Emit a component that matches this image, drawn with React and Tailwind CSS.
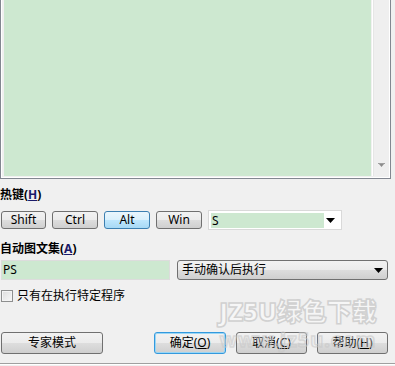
import React from "react";

const font = { fontFamily: '"Noto Sans", "Noto Sans CJK SC", sans-serif' };

function Btn({ children, className = "", variant = "normal" }) {
  const base =
    "flex items-center justify-center rounded-[3px] border text-[12px] leading-none text-black";
  const v =
    variant === "pressed"
      ? "border-[#3c7fb1] bg-[linear-gradient(#eaf6fd_0%,#d9f0fc_50%,#bee6fd_51%,#a7d9f5_100%)]"
      : variant === "default"
      ? "border-[#3399dd] shadow-[inset_0_0_0_1px_#9ad6f5] bg-[linear-gradient(#f2f2f2_0%,#ebebeb_50%,#dddddd_51%,#cfcfcf_100%)]"
      : "border-[#707070] bg-[linear-gradient(#f2f2f2_0%,#ebebeb_50%,#dddddd_51%,#cfcfcf_100%)]";
  return <div className={`${base} ${v} ${className}`}>{children}</div>;
}

function Tri() {
  return (
    <svg width="9" height="5" viewBox="0 0 9 5">
      <path d="M0 0H9L4.5 5Z" fill="#000" />
    </svg>
  );
}

export default function App() {
  return (
    <div
      className="relative w-[395px] h-[366px] overflow-hidden bg-[#f0f0f0] flex flex-col"
      style={font}
    >
      {/* text area */}
      <div className="w-[391px] h-[179px] border-x border-b border-[#828790] flex">
        <div className="flex-1 border-x border-b border-white bg-[#f0f0f0] flex pl-[2px] pb-[1px]">
          <div className="w-[367px] h-full bg-[#cde8d0]" />
          <div className="ml-[1px] w-[1px] bg-white" />
          <div className="flex-1 bg-[#efefef] border-l border-[#e6e6e6] flex flex-col justify-end items-center pb-[8px]">
            <svg width="7" height="5" viewBox="0 0 7 5">
              <path d="M0 0H7V1H0Z" fill="#a0a0a0" />
              <path d="M1 1H6L3.5 4Z" fill="#8c8c8c" />
            </svg>
          </div>
        </div>
      </div>

      <div className="mt-[8px] h-[16px] flex items-center text-[12px] font-bold text-black leading-none">
        热键(<span className="underline text-[#1a1a6a]">H</span>)
      </div>

      <div className="mt-[7px] h-[20px] flex items-center pl-[1px] gap-[6px]">
        <Btn className="w-[45px] h-[18px]">Shift</Btn>
        <Btn className="w-[46px] h-[18px]">Ctrl</Btn>
        <Btn className="w-[46px] h-[18px]" variant="pressed">Alt</Btn>
        <Btn className="w-[46px] h-[18px]">Win</Btn>
        <div className="w-[134px] h-[20px] bg-white border border-[#d9d9d9] flex items-center pl-[2px] pr-[6px]">
          <div className="w-[113px] h-[15px] bg-[#cde8d0] text-[12px] leading-[15px] pl-[1px]">S</div>
          <div className="flex-1 flex justify-end">
            <Tri />
          </div>
        </div>
      </div>

      <div className="mt-[11px] h-[16px] flex items-center text-[12px] font-bold text-black leading-none">
        自动图文集(<span className="underline text-[#1a1a6a]">A</span>)
      </div>

      <div className="mt-[3px] h-[20px] flex items-center pl-[1px] gap-[7px]">
        <div className="w-[169px] h-[20px] bg-[#cde8d0] border border-[#dcdcdc] text-[12px] leading-[18px] pl-[1px]">
          PS
        </div>
        <Btn className="w-[211px] h-[20px] !justify-between px-[4px]">
          <span>手动确认后执行</span>
          <Tri />
        </Btn>
      </div>

      <div className="mt-[8px] h-[16px] flex items-center pl-[1px] gap-[4px] text-[12px] leading-none">
        <div className="w-[12px] h-[12px] border border-[#8e8f8f] bg-[linear-gradient(135deg,#dcdcdc,#f8f8f8)] shadow-[inset_0_0_0_1px_#f4f4f4]" />
        <span>只有在执行特定程序</span>
      </div>

      <div className="mt-[28px] h-[22px] flex items-center pl-[1px]">
        <Btn className="w-[102px] h-[22px]">专家模式</Btn>
        <Btn className="ml-[51px] w-[72px] h-[22px]" variant="default">
          确定(<span className="underline">O</span>)
        </Btn>
        <Btn className="ml-[10px] w-[71px] h-[22px]">
          取消(<span className="underline">C</span>)
        </Btn>
        <Btn className="ml-[10px] w-[71px] h-[22px]">
          帮助(<span className="underline">H</span>)
        </Btn>
      </div>

      <div className="mt-[9px] h-[1px] w-full bg-[#a0a0a0]" />
      <div className="h-[1px] w-full bg-white" />

      {/* watermark */}
      <div className="pointer-events-none absolute left-[213px] top-[299px] w-[170px] flex flex-col items-center whitespace-nowrap opacity-60">
        <div className="text-[25px] font-black leading-none text-[#fafafa] [-webkit-text-stroke:1.5px_#bdbdbd]">JZ5U绿色下载</div>
        <div className="mt-[6px] text-[20px] font-bold leading-none tracking-[1px] text-transparent [-webkit-text-stroke:1.5px_#c8c8c8]">www.jz5u.com</div>
      </div>
    </div>
  );
}
